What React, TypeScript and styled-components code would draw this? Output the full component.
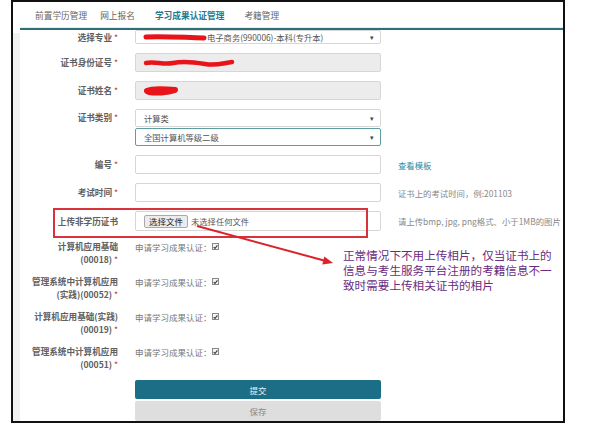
import styled, { createGlobalStyle } from "styled-components";

const GlobalStyle = createGlobalStyle`
  html, body {
    margin: 0;
    padding: 0;
    background: #ffffff;
  }
  body {
    font-family: "Noto Sans CJK SC", "Noto Sans", sans-serif;
  }
`;

const navItems = ["前置学历管理", "网上报名", "学习成果认证管理", "考籍管理"];

const courses = [
  { name: "计算机应用基础", code: "(00018)" },
  { name: "管理系统中计算机应用", code: "(实践)(00052)" },
  { name: "计算机应用基础(实践)", code: "(00019)" },
  { name: "管理系统中计算机应用", code: "(00051)" },
];

/* red marker scribbles that hide personal data */
const Scribble = ({ w, h, d, sw }: { w: number; h: number; d: string; sw: number }) => (
  <ScribbleSvg width={w} height={h} viewBox={`0 0 ${w} ${h}`}>
    <path d={d} stroke="#e8141a" strokeWidth={sw} strokeLinecap="round" strokeLinejoin="round" fill="none" />
  </ScribbleSvg>
);

const Caret = () => <CaretMark>▾</CaretMark>;

const Check = () => (
  <CheckBox>
    <svg width="6" height="6" viewBox="0 0 6 6">
      <path d="M0.8 3.2 L2.4 4.8 L5.3 1" stroke="#333" strokeWidth="1.3" fill="none" />
    </svg>
  </CheckBox>
);

export default function App() {
  return (
    <>
      <GlobalStyle />
      <Frame>
        <SideRail />
        <Main>
          <Nav>
            {navItems.map((item, i) => (
              <NavItem key={item} active={i === 2}>
                {item}
              </NavItem>
            ))}
          </Nav>

          <Form>
            <Label>
              选择专业 <Star>*</Star>
            </Label>
            <Field h={14}>
              <Scribble w={64} h={9} sw={5} d="M3 4 C20 3, 40 4.5, 61 5" />
              <FieldText>电子商务(990006)-本科(专升本)</FieldText>
              <Caret />
            </Field>
            <Help />

            <Label>
              证书身份证号 <Star>*</Star>
            </Label>
            <Field h={19} disabled>
              <Scribble w={92} h={10} sw={4.5} d="M3 5 C12 3, 20 7, 30 5 S50 4, 62 6 S80 5, 89 4" />
            </Field>
            <Help />

            <Label>
              证书姓名 <Star>*</Star>
            </Label>
            <Field h={19} disabled>
              <Scribble w={36} h={11} sw={6} d="M4 6 C10 3, 22 4, 32 5 C24 8, 12 8, 6 7" />
            </Field>
            <Help />

            <Label top pad={2}>
              证书类别 <Star>*</Star>
            </Label>
            <Stack>
              <Field h={18}>
                <FieldText>计算类</FieldText>
                <Caret />
              </Field>
              <Field h={18} focused>
                <FieldText>全国计算机等级二级</FieldText>
                <Caret />
              </Field>
            </Stack>
            <Help />

            <Label>
              编号 <Star>*</Star>
            </Label>
            <Field h={19} />
            <Help link>查看模板</Help>

            <Label>
              考试时间 <Star>*</Star>
            </Label>
            <Field h={19} />
            <Help>证书上的考试时间，例:201103</Help>

            <Label>上传非学历证书</Label>
            <Field h={20}>
              <FileButton>选择文件</FileButton>
              <FieldText>未选择任何文件</FieldText>
            </Field>
            <Help>请上传bmp, jpg, png格式、小于1MB的图片</Help>

            {courses.map((c, i) => (
              <CourseRow key={i}>
                <Label top>
                  {c.name}
                  <br />
                  {c.code} <Star>*</Star>
                </Label>
                <CheckText>
                  申请学习成果认证：
                  <Check />
                </CheckText>
                <Help />
              </CourseRow>
            ))}

            <Spacer />
            <Buttons>
              <Button primary>提交</Button>
              <Button>保存</Button>
            </Buttons>
            <Help />
          </Form>
        </Main>

        <RedBox />
        <ArrowLayer width="550" height="419" viewBox="0 0 550 419">
          <line x1="184" y1="224" x2="311" y2="258.5" stroke="#d9242b" strokeWidth="2" />
          <polygon points="320,261 309.3,262.4 311.4,254.4" fill="#d9242b" />
        </ArrowLayer>
        <Note>
          正常情况下不用上传相片，仅当证书上的
          <br />
          信息与考生服务平台注册的考籍信息不一
          <br />
          致时需要上传相关证书的相片
        </Note>
      </Frame>
    </>
  );
}

const Frame = styled.div`
  position: relative;
  box-sizing: border-box;
  width: 554px;
  height: 423px;
  margin-left: 11px;
  border: 2px solid #111;
  display: flex;
  overflow: hidden;
  background: #fff;
`;

const SideRail = styled.div`
  width: 7px;
  flex-shrink: 0;
  background: linear-gradient(#ffffff 0 31px, #f1f1f1 31px);
`;

const Main = styled.div`
  flex: 1;
  display: flex;
  flex-direction: column;
  min-width: 0;
`;

const Nav = styled.div`
  height: 29px;
  display: flex;
  align-items: center;
  gap: 13px;
  padding-left: 15px;
  border-bottom: 2px solid #2f6f78;
  box-shadow: inset 0 -1px 0 #f1e9ea;
`;

const NavItem = styled.span<{ active?: boolean }>`
  font-size: 8.7px;
  color: ${(p) => (p.active ? "#1e7a8e" : "#666")};
  font-weight: ${(p) => (p.active ? 700 : 400)};
  padding: 0 ${(p) => (p.active ? "7px" : "0")};
`;

const Form = styled.div`
  display: grid;
  grid-template-columns: 98px 246px 1fr;
  column-gap: 17px;
  row-gap: 9px;
  align-items: center;
`;

const CourseRow = styled.div`
  display: contents;
`;

const Label = styled.div<{ top?: boolean; pad?: number }>`
  text-align: right;
  font-size: 8.6px;
  line-height: 13px;
  font-weight: 700;
  color: #606060;
  align-self: ${(p) => (p.top ? "start" : "center")};
  padding-top: ${(p) => p.pad ?? 0}px;
  white-space: nowrap;
`;

const Star = styled.span`
  color: #c9302c;
  font-weight: 400;
`;

const Field = styled.div<{ h: number; disabled?: boolean; focused?: boolean }>`
  box-sizing: border-box;
  height: ${(p) => p.h}px;
  display: flex;
  align-items: center;
  padding: 0 6px 0 8px;
  border: 1px solid ${(p) => (p.focused ? "#5e9ea0" : "#d6d6d6")};
  border-radius: 2px;
  background: ${(p) => (p.disabled ? "#ececec" : "#fff")};
  overflow: hidden;
`;

const Stack = styled.div`
  display: flex;
  flex-direction: column;
  gap: 1px;
`;

const FieldText = styled.span`
  flex: 1;
  font-size: 8.3px;
  color: #555;
  white-space: nowrap;
`;

const ScribbleSvg = styled.svg`
  flex-shrink: 0;
  margin-left: -1px;
`;

const CaretMark = styled.span`
  font-size: 7px;
  color: #444;
  margin-left: auto;
`;

const FileButton = styled.span`
  font-size: 8.5px;
  color: #222;
  background: #ececec;
  border: 1px solid #a9a9a9;
  border-radius: 2px;
  padding: 0 4px;
  line-height: 11px;
  margin-right: 3px;
`;

const Help = styled.div<{ link?: boolean }>`
  font-size: 8.4px;
  color: ${(p) => (p.link ? "#2b8aa1" : "#888")};
  white-space: nowrap;
`;

const CheckText = styled.div`
  align-self: start;
  display: flex;
  align-items: center;
  height: 13px;
  font-size: 8.5px;
  color: #777;
  margin-bottom: 13px;
`;

const CheckBox = styled.span`
  display: inline-flex;
  align-items: center;
  justify-content: center;
  box-sizing: border-box;
  width: 7px;
  height: 7px;
  border: 1px solid #888;
  background: #f4f4f4;
`;

const Spacer = styled.div`
  margin-top: -3px;
`;

const Buttons = styled.div`
  display: flex;
  flex-direction: column;
  gap: 2px;
`;

const Button = styled.div<{ primary?: boolean }>`
  height: ${(p) => (p.primary ? "19px" : "20px")};
  display: flex;
  align-items: center;
  justify-content: center;
  border-radius: 2px;
  font-size: 8.5px;
  color: ${(p) => (p.primary ? "#e6f1f4" : "#888")};
  background: ${(p) => (p.primary ? "#1b6e86" : "#dedede")};
`;

/* annotations laid over the screenshot */
const RedBox = styled.div`
  position: absolute;
  left: 40px;
  top: 206px;
  width: 315px;
  height: 30px;
  box-sizing: border-box;
  border: 2px solid #d8333a;
  pointer-events: none;
`;

const ArrowLayer = styled.svg`
  position: absolute;
  left: 0;
  top: 0;
  pointer-events: none;
`;

const Note = styled.div`
  position: absolute;
  left: 330px;
  top: 246px;
  font-size: 11.6px;
  line-height: 15px;
  color: #6a2c80;
  white-space: nowrap;
`;
